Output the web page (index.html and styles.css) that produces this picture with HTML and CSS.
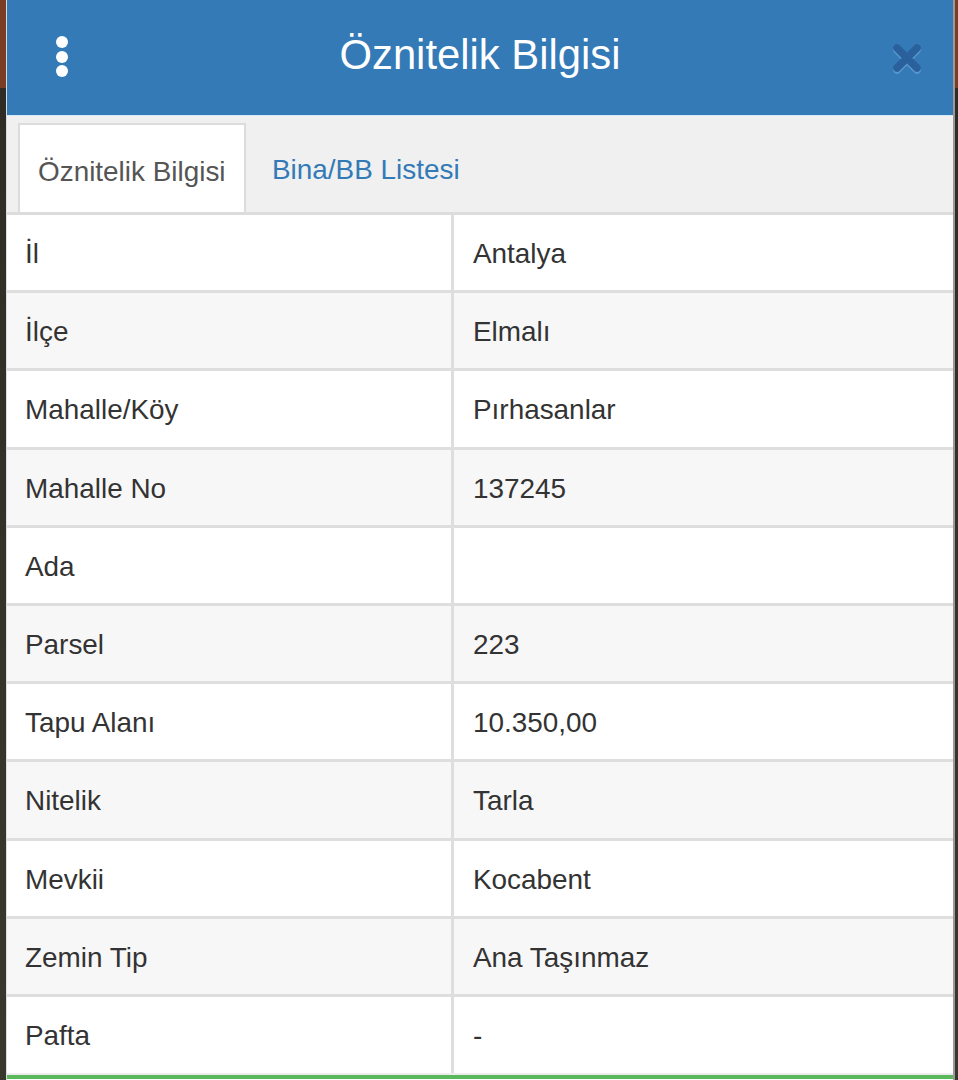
FILE: index.html
```html
<!DOCTYPE html>
<html lang="tr">
<head>
<meta charset="utf-8">
<title>Öznitelik Bilgisi</title>
<link rel="stylesheet" href="styles.css">
</head>
<body>
<div class="modal">
  <header class="modal-header">
    <button class="kebab" aria-label="Menü"><span></span><span></span><span></span></button>
    <h1 class="title">Öznitelik Bilgisi</h1>
    <button class="close" aria-label="Kapat">
      <svg width="32" height="34" viewBox="0 0 32 34">
        <path d="M6 8 L26 28 M26 8 L6 28" stroke="#5b97cf" stroke-width="7.5" stroke-linecap="round" fill="none"/>
        <path d="M6 6 L26 26 M26 6 L6 26" stroke="#2a619c" stroke-width="7.5" stroke-linecap="round" fill="none"/>
      </svg>
    </button>
  </header>
  <nav class="tabs">
    <a class="tab active">Öznitelik Bilgisi</a>
    <a class="tab link">Bina/BB Listesi</a>
  </nav>
  <div class="attr">
    <div class="row"><div class="cell key">İl</div><div class="cell val">Antalya</div></div>
    <div class="row"><div class="cell key">İlçe</div><div class="cell val">Elmalı</div></div>
    <div class="row"><div class="cell key">Mahalle/Köy</div><div class="cell val">Pırhasanlar</div></div>
    <div class="row"><div class="cell key">Mahalle No</div><div class="cell val">137245</div></div>
    <div class="row"><div class="cell key">Ada</div><div class="cell val"></div></div>
    <div class="row"><div class="cell key">Parsel</div><div class="cell val">223</div></div>
    <div class="row"><div class="cell key">Tapu Alanı</div><div class="cell val">10.350,00</div></div>
    <div class="row"><div class="cell key">Nitelik</div><div class="cell val">Tarla</div></div>
    <div class="row"><div class="cell key">Mevkii</div><div class="cell val">Kocabent</div></div>
    <div class="row"><div class="cell key">Zemin Tip</div><div class="cell val">Ana Taşınmaz</div></div>
    <div class="row"><div class="cell key">Pafta</div><div class="cell val">-</div></div>
  </div>
  <div class="footer-bar"></div>
</div>
</body>
</html>
```

FILE: styles.css
```css
* { box-sizing: border-box; }
html, body { margin: 0; padding: 0; }
body {
  width: 958px;
  height: 1080px;
  overflow: hidden;
  background: linear-gradient(to bottom, #7a3f22 0, #7a3f22 88px, #2f2c25 88px, #3a382e 100%);
  font-family: "Liberation Sans", Arial, Helvetica, sans-serif;
  color: #333;
}
.modal {
  margin-left: 6px;
  width: 949px;
  background: #fff;
  border-left: 1px solid #dcdcdc;
  border-right: 2px solid #9a9a9a;
}
.modal-header {
  height: 116px;
  background: #337ab7;
  border-bottom: 1px solid #d6eaf6;
  display: grid;
  grid-template-columns: 1fr auto 1fr;
  align-items: center;
}
.kebab {
  justify-self: start;
  margin-left: 49px;
  margin-bottom: 2px;
  padding: 0;
  background: none;
  border: 0;
  display: flex;
  flex-direction: column;
  gap: 2.5px;
}
.kebab span {
  display: block;
  width: 12px;
  height: 12px;
  border-radius: 50%;
  background: #fff;
}
.title {
  margin: 0 0 5px;
  font-weight: normal;
  font-size: 41.8px;
  color: #fff;
  line-height: 1;
}
.close {
  justify-self: end;
  margin-right: 30px;
  margin-top: 2px;
  padding: 0;
  background: none;
  border: 0;
  display: flex;
}
.tabs {
  height: 99px;
  background: #f0f0f0;
  border-bottom: 3px solid #dcdcdc;
  padding: 7px 0 0 11px;
  display: flex;
  align-items: flex-end;
}
.tab {
  height: 89px;
  padding-top: 5px;
  line-height: 84px;
  font-size: 27.9px;
  white-space: nowrap;
}
.tab.active {
  width: 228px;
  padding-left: 18px;
  background: #fff;
  border: 2px solid #dcdcdc;
  border-bottom: 0;
  color: #555;
}
.tab.link {
  padding-left: 26px;
  color: #337ab7;
}
.attr { display: flex; flex-direction: column; }
.row {
  height: 78.2px;
  display: grid;
  grid-template-columns: 447px 1fr;
  border-bottom: 3px solid #dedede;
  font-size: 27.9px;
}
.row:nth-child(even) { background: #f8f7f7; }
.cell {
  display: flex;
  align-items: center;
  padding-top: 3px;
}
.key {
  padding-left: 18px;
  border-right: 3px solid #dedede;
}
.val { padding-left: 19px; }
.row:last-child { border-bottom: 2px solid #ececec; }
.footer-bar {
  height: 40px;
  border-top: 4px solid #5cb85c;
}
```
